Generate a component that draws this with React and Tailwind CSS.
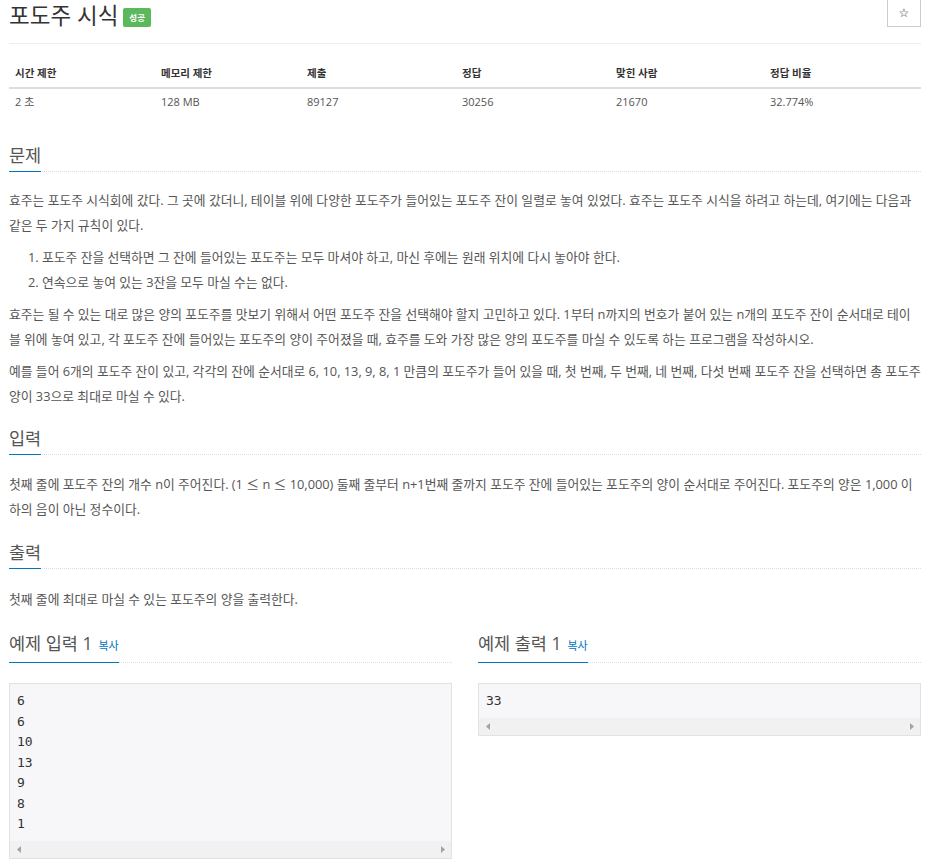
const stats = [
  ['시간 제한', '2 초'],
  ['메모리 제한', '128 MB'],
  ['제출', '89127'],
  ['정답', '30256'],
  ['맞힌 사람', '21670'],
  ['정답 비율', '32.774%'],
]

function Headline({ children }) {
  return (
    <div className="flex border-b border-dotted border-[#ddd]">
      <h2 className="-mb-px flex items-baseline gap-[6px] border-b border-[#0076c0] pb-[6px] text-[17.5px] leading-[20px] font-normal text-[#555]">
        {children}
      </h2>
    </div>
  )
}

function Section({ title, className, bodyClass = 'mt-4', children }) {
  return (
    <section className={className}>
      <Headline>{title}</Headline>
      <div className={`${bodyClass} flex flex-col gap-[7px] break-all text-[12.8px] leading-[25px] text-[#555]`}>
        {children}
      </div>
    </section>
  )
}

function Arrow({ dir }) {
  return (
    <div className="w-[17px] h-[17px] flex items-center justify-center">
      <svg width="4" height="7" viewBox="0 0 4 7">
        <polygon points={dir === 'left' ? '4,0 4,7 0,3.5' : '0,0 0,7 4,3.5'} fill="#a3a3a3" />
      </svg>
    </div>
  )
}

function Sample({ title, lines }) {
  return (
    <div>
      <Headline>
        <span>{title}</span>
        <a className="text-[11px] text-[#0076c0]">복사</a>
      </Headline>
      <div className="mt-[20px] border border-[#e1e1e8] bg-[#f7f7f9]">
        <pre className="px-[7px] pt-[7px] pb-[6px] font-['DejaVu_Sans_Mono',monospace] text-[13px] leading-[20.5px] text-[#333]">
          {lines.join('\n')}
        </pre>
        <div className="flex justify-between bg-[#f1f1f1]">
          <Arrow dir="left" />
          <Arrow dir="right" />
        </div>
      </div>
    </div>
  )
}

const Le = () => <span className="font-['Noto_Sans_CJK_KR',sans-serif]">≤</span>

export default function App() {
  return (
    <div className="min-h-screen bg-white font-['Open_Sans','Noto_Sans_CJK_KR',sans-serif]">
      <div className="ml-[9px] w-[912px] pb-[10px]">
        {/* title */}
        <div className="flex items-start justify-between">
          <div className="flex items-center gap-[5px]">
            <h1 className="text-[22.5px] leading-[32px] font-normal text-[#333]">포도주 시식</h1>
            <span className="mt-[3px] rounded-[2px] bg-[#5cb85c] px-[6px] py-[3px] text-[8.5px] leading-[13px] font-bold text-white">
              성공
            </span>
          </div>
          <button className="flex h-[27px] w-[34px] items-center justify-center border border-t-0 border-[#ccc] bg-white font-['DejaVu_Sans',sans-serif] text-[12px] text-[#333]">
            ☆
          </button>
        </div>
        <div className="mt-[11px] border-t border-[#eee]" />

        {/* stats table */}
        <div className="mt-4 grid grid-cols-[146px_146px_155px_154px_154px_1fr] leading-[17px] text-[#333]">
          {stats.map(([h]) => (
            <div key={h} className="border-b-2 border-[#ddd] px-[6px] pt-[5px] pb-[5px] text-[10.5px] font-bold">
              {h}
            </div>
          ))}
          {stats.map(([h, v]) => (
            <div key={h} className="px-[6px] py-[4px] text-[11px] text-[#555]">
              {v}
            </div>
          ))}
        </div>

        <Section title="문제" className="mt-[31px]">
          <p>
            효주는 포도주 시식회에 갔다. 그 곳에 갔더니, 테이블 위에 다양한 포도주가 들어있는 포도주 잔이 일렬로 놓여 있었다. 효주는 포도주 시식을 하려고 하는데, 여기에는 다음과 같은 두 가지 규칙이 있다.
          </p>
          <ol className="list-decimal pl-[33px]">
            <li>포도주 잔을 선택하면 그 잔에 들어있는 포도주는 모두 마셔야 하고, 마신 후에는 원래 위치에 다시 놓아야 한다.</li>
            <li>연속으로 놓여 있는 3잔을 모두 마실 수는 없다.</li>
          </ol>
          <p>
            효주는 될 수 있는 대로 많은 양의 포도주를 맛보기 위해서 어떤 포도주 잔을 선택해야 할지 고민하고 있다. 1부터 n까지의 번호가 붙어 있는 n개의 포도주 잔이 순서대로 테이블 위에 놓여 있고, 각 포도주 잔에 들어있는 포도주의 양이 주어졌을 때, 효주를 도와 가장 많은 양의 포도주를 마실 수 있도록 하는 프로그램을 작성하시오.
          </p>
          <p>
            예를 들어 6개의 포도주 잔이 있고, 각각의 잔에 순서대로 6, 10, 13, 9, 8, 1 만큼의 포도주가 들어 있을 때, 첫 번째, 두 번째, 네 번째, 다섯 번째 포도주 잔을 선택하면 총 포도주 양이 33으로 최대로 마실 수 있다.
          </p>
        </Section>
        <Section title="입력" className="mt-[19px]">
          <p>
            첫째 줄에 포도주 잔의 개수 n이 주어진다. (1 <Le /> n <Le /> 10,000) 둘째 줄부터 n+1번째 줄까지 포도주 잔에 들어있는 포도주의 양이 순서대로 주어진다. 포도주의 양은 1,000 이하의 음이 아닌 정수이다.
          </p>
        </Section>
        <Section title="출력" className="mt-[20px]" bodyClass="mt-[18px]">
          <p>첫째 줄에 최대로 마실 수 있는 포도주의 양을 출력한다.</p>
        </Section>

        <div className="mt-[21px] grid grid-cols-2 gap-[26px] items-start">
          <Sample title="예제 입력 1" lines={['6', '6', '10', '13', '9', '8', '1']} />
          <Sample title="예제 출력 1" lines={['33']} />
        </div>
      </div>
    </div>
  )
}
